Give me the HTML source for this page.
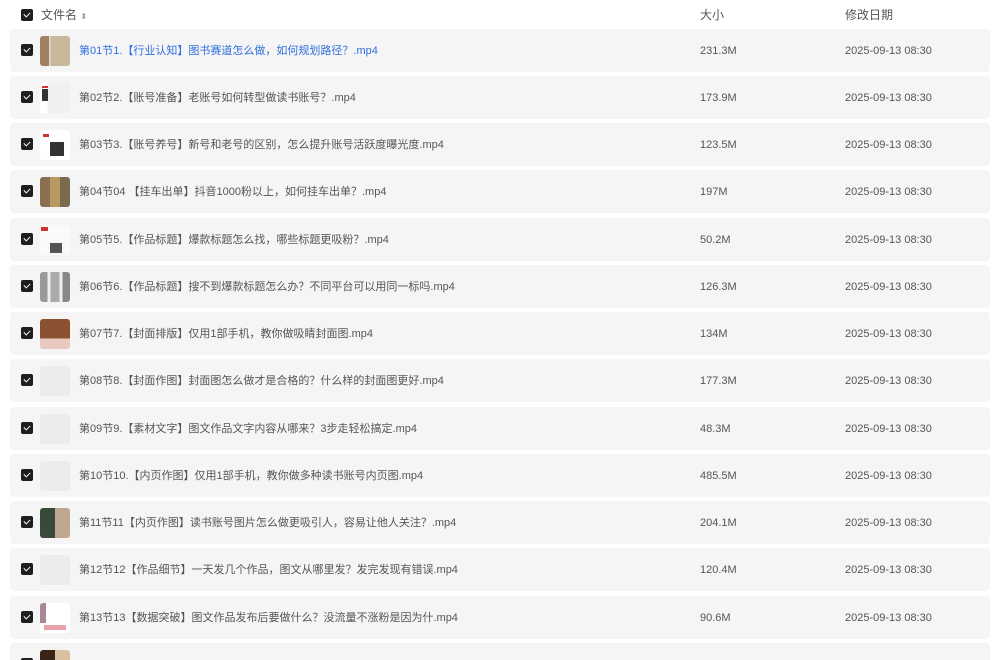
<!DOCTYPE html>
<html><head><meta charset="utf-8"><style>
html,body{margin:0;width:1000px;height:660px;overflow:hidden}
body{background:#fff;font-family:"Liberation Sans","Noto Sans CJK SC",sans-serif;font-size:11px;line-height:15px;color:#555;position:relative}
.cb{position:absolute;width:12px;height:12px;background:#1e1e1e;border-radius:2px}
.cb:after{content:"";position:absolute;left:4px;top:2px;width:3px;height:5px;border:solid #fff;border-width:0 1.5px 1.5px 0;transform:rotate(45deg)}
.hd{position:absolute;top:7px;font-size:12px;line-height:16px;color:#555}
.row{position:absolute;left:10px;width:980px;height:43px;background:#f5f5f5;border-radius:4px}
.row .cb{left:11px;top:15px}
.th{position:absolute;left:30px;top:7px;width:30px;height:30px;border-radius:3px;background:#ececec;overflow:hidden}
.nm{position:absolute;left:69px;top:15px;white-space:nowrap}
.sz{position:absolute;left:690px;top:15px}
.dt{position:absolute;left:835px;top:15px}
</style></head><body>
<div class="cb" style="left:21px;top:9px"></div>
<div class="hd" style="left:41px">文件名 <span style="font-size:8px;color:#999">⬍</span></div>
<div class="hd" style="left:700px">大小</div>
<div class="hd" style="left:845px">修改日期</div>

<div class="row" style="top:29px"><div class="cb"></div><div class="th" style="background:linear-gradient(90deg,#a08060 0 30%,#ddd 30% 35%,#c9b89a 35% 100%)"></div><div class="nm" style="color:#2f6fe0">第01节1.【行业认知】图书赛道怎么做，如何规划路径？.mp4</div><div class="sz">231.3M</div><div class="dt">2025-09-13 08:30</div></div>
<div class="row" style="top:76px"><div class="cb"></div><div class="th" style="background:linear-gradient(90deg,#fff 0 25%,#f0f0f0 25%);"><div style="position:absolute;left:2px;top:6px;width:6px;height:12px;background:#333"></div><div style="position:absolute;left:2px;top:3px;width:6px;height:2px;background:#d33"></div></div><div class="nm">第02节2.【账号准备】老账号如何转型做读书账号？.mp4</div><div class="sz">173.9M</div><div class="dt">2025-09-13 08:30</div></div>
<div class="row" style="top:123px"><div class="cb"></div><div class="th" style="background:#fff"><div style="position:absolute;left:3px;top:4px;width:6px;height:3px;background:#c33"></div><div style="position:absolute;left:10px;top:12px;width:14px;height:14px;background:#333"></div></div><div class="nm">第03节3.【账号养号】新号和老号的区别，怎么提升账号活跃度曝光度.mp4</div><div class="sz">123.5M</div><div class="dt">2025-09-13 08:30</div></div>
<div class="row" style="top:170px"><div class="cb"></div><div class="th" style="background:linear-gradient(90deg,#8a7050 0 33%,#b89a60 33% 66%,#7a6a50 66%)"></div><div class="nm">第04节04 【挂车出单】抖音1000粉以上，如何挂车出单？.mp4</div><div class="sz">197M</div><div class="dt">2025-09-13 08:30</div></div>
<div class="row" style="top:218px"><div class="cb"></div><div class="th" style="background:#fafafa"><div style="position:absolute;left:1px;top:2px;width:7px;height:4px;background:#c33"></div><div style="position:absolute;left:10px;top:18px;width:12px;height:10px;background:#555"></div></div><div class="nm">第05节5.【作品标题】爆款标题怎么找，哪些标题更吸粉？.mp4</div><div class="sz">50.2M</div><div class="dt">2025-09-13 08:30</div></div>
<div class="row" style="top:265px"><div class="cb"></div><div class="th" style="background:linear-gradient(90deg,#999 0 25%,#eee 25% 35%,#aaa 35% 65%,#eee 65% 75%,#888 75%)"></div><div class="nm">第06节6.【作品标题】搜不到爆款标题怎么办？不同平台可以用同一标吗.mp4</div><div class="sz">126.3M</div><div class="dt">2025-09-13 08:30</div></div>
<div class="row" style="top:312px"><div class="cb"></div><div class="th" style="background:linear-gradient(180deg,#8a5030 0 65%,#e8c8c0 65%)"></div><div class="nm">第07节7.【封面排版】仅用1部手机，教你做吸睛封面图.mp4</div><div class="sz">134M</div><div class="dt">2025-09-13 08:30</div></div>
<div class="row" style="top:359px"><div class="cb"></div><div class="th"></div><div class="nm">第08节8.【封面作图】封面图怎么做才是合格的？什么样的封面图更好.mp4</div><div class="sz">177.3M</div><div class="dt">2025-09-13 08:30</div></div>
<div class="row" style="top:407px"><div class="cb"></div><div class="th"></div><div class="nm">第09节9.【素材文字】图文作品文字内容从哪来？3步走轻松搞定.mp4</div><div class="sz">48.3M</div><div class="dt">2025-09-13 08:30</div></div>
<div class="row" style="top:454px"><div class="cb"></div><div class="th"></div><div class="nm">第10节10.【内页作图】仅用1部手机，教你做多种读书账号内页图.mp4</div><div class="sz">485.5M</div><div class="dt">2025-09-13 08:30</div></div>
<div class="row" style="top:501px"><div class="cb"></div><div class="th" style="background:linear-gradient(90deg,#3a4a38 0 50%,#c0a890 50%)"></div><div class="nm">第11节11【内页作图】读书账号图片怎么做更吸引人，容易让他人关注？.mp4</div><div class="sz">204.1M</div><div class="dt">2025-09-13 08:30</div></div>
<div class="row" style="top:548px"><div class="cb"></div><div class="th"></div><div class="nm">第12节12【作品细节】一天发几个作品，图文从哪里发？发完发现有错误.mp4</div><div class="sz">120.4M</div><div class="dt">2025-09-13 08:30</div></div>
<div class="row" style="top:596px"><div class="cb"></div><div class="th" style="background:#fff"><div style="position:absolute;left:0;top:0;width:6px;height:20px;background:#a89;"></div><div style="position:absolute;left:4px;top:22px;width:22px;height:5px;background:#e8a0a8"></div></div><div class="nm">第13节13【数据突破】图文作品发布后要做什么？没流量不涨粉是因为什.mp4</div><div class="sz">90.6M</div><div class="dt">2025-09-13 08:30</div></div>
<div class="row" style="top:643px"><div class="cb"></div><div class="th" style="background:linear-gradient(90deg,#3a2418 0 50%,#d8c0a0 50%)"></div></div>
</body></html>
